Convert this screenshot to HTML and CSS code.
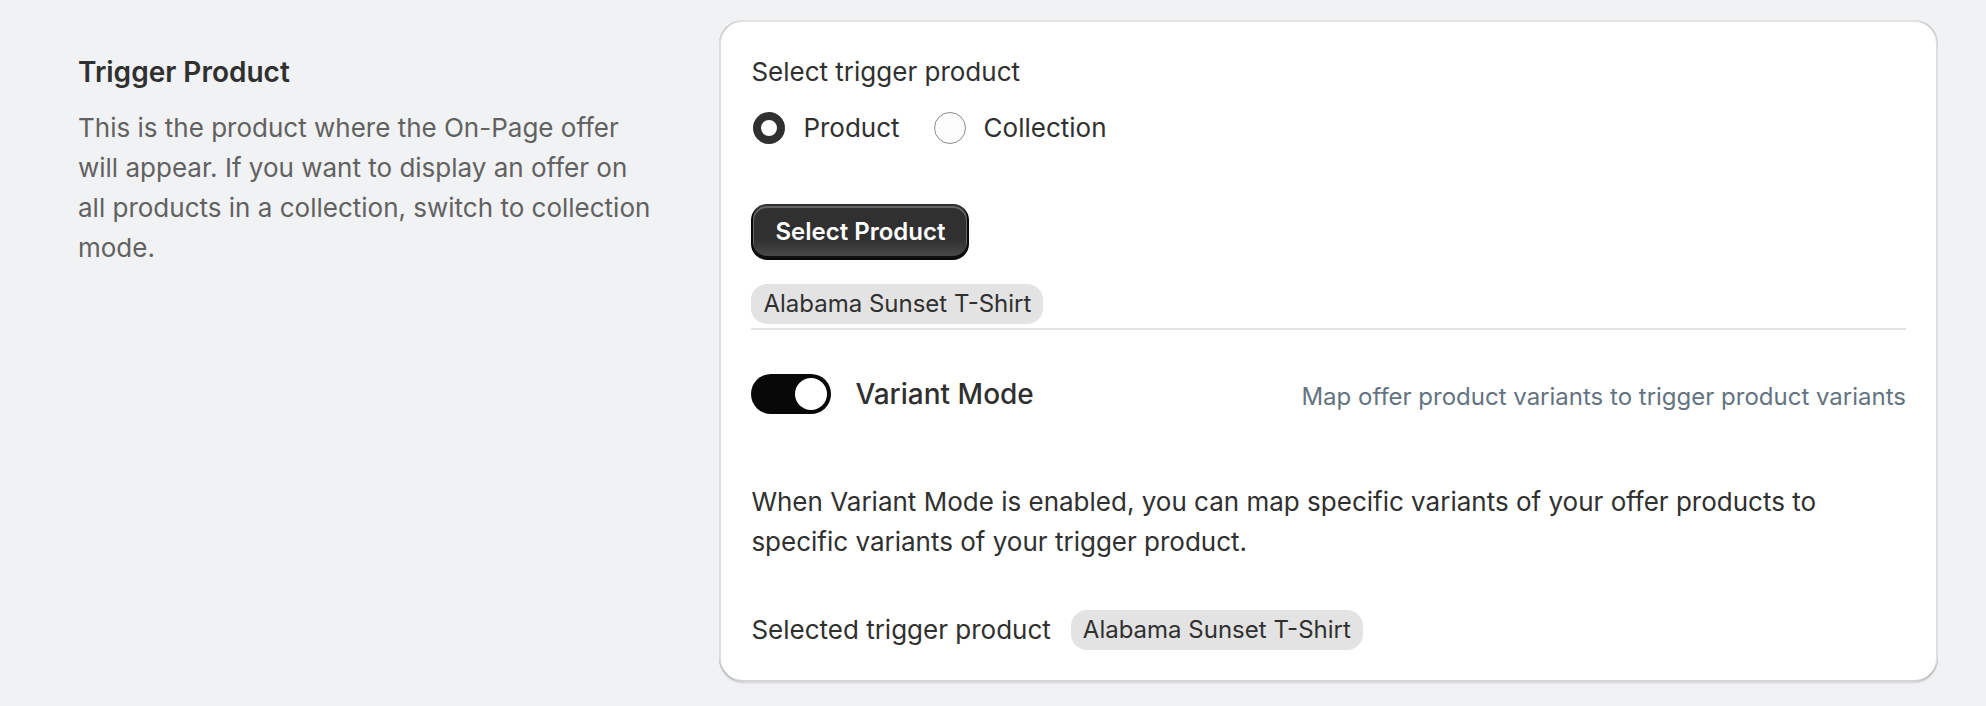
FILE: index.html
```html
<!DOCTYPE html>
<html lang="en">
<head>
<meta charset="utf-8">
<title>Trigger Product</title>
<link rel="stylesheet" href="styles.css">
</head>
<body>
<main class="layout">
  <section class="annotation">
    <h2 class="annotation-title">Trigger Product</h2>
    <p class="annotation-text">This is the product where the On-Page offer will appear. If you want to display an offer on all products in a collection, switch to collection mode.</p>
  </section>
  <section class="card">
    <fieldset class="choices">
      <legend class="choices-title">Select trigger product</legend>
      <div class="choices-row">
        <label class="choice"><input class="radio" type="radio" name="trigger" checked>Product</label>
        <label class="choice"><input class="radio" type="radio" name="trigger">Collection</label>
      </div>
    </fieldset>
    <button class="button" type="button">Select Product</button>
    <div class="selection"><span class="tag">Alabama Sunset T-Shirt</span></div>
    <div class="mode">
      <label class="mode-label"><input class="switch" type="checkbox" role="switch" checked>Variant Mode</label>
      <span class="mode-hint">Map offer product variants to trigger product variants</span>
    </div>
    <p class="mode-text">When Variant Mode is enabled, you can map specific variants of your offer products to specific variants of your trigger product.</p>
    <div class="selected"><span>Selected trigger product</span><span class="tag">Alabama Sunset T-Shirt</span></div>
  </section>
</main>
</body>
</html>
```
FILE: styles.css
```css
* {
  box-sizing: border-box;
}

body {
  margin: 0;
  background: #f1f2f4;
  color: #303030;
  font-family: Inter, "Liberation Sans", sans-serif;
  font-size: 26px;
  font-weight: 400;
  line-height: 40px;
}

.layout {
  display: grid;
  grid-template-columns: 10fr 19fr;
  gap: 32px;
  padding: 20px 48px 20px 46px;
}

.annotation {
  padding: 32px 32px 0;
}

.annotation-title {
  margin: 0 0 16px;
  font-size: 28px;
  font-weight: 600;
}

.annotation-text {
  margin: 0;
  color: #616161;
}

.card {
  padding: 32px;
  border-radius: 24px;
  background: #fff;
  box-shadow:
    0 2px 0 rgba(26, 26, 26, 0.07),
    inset 2px 0 0 rgba(0, 0, 0, 0.13),
    inset -2px 0 0 rgba(0, 0, 0, 0.13),
    inset 0 -2px 0 rgba(0, 0, 0, 0.17),
    inset 0 2px 0 rgba(204, 204, 204, 0.5);
}

.choices {
  margin: 0 0 56px;
  padding: 0;
  border: 0;
}

.choices-title {
  margin-bottom: 16px;
  padding: 0;
}

.choices-row {
  display: flex;
  gap: 32px;
}

.choice {
  display: flex;
  align-items: center;
  gap: 16px;
}

.radio {
  appearance: none;
  width: 32px;
  height: 32px;
  margin: 0 2px;
  border: 1px solid #8a8a8a;
  border-radius: 50%;
  background: #fdfdfd;
}

.radio:checked {
  border: 8px solid #303030;
  background: #fff;
}

.button {
  display: block;
  height: 56px;
  padding: 0 24px;
  border: 0;
  border-radius: 16px;
  background: linear-gradient(rgba(48, 48, 48, 0) 63%, rgba(255, 255, 255, 0.15) 100%), #303030;
  box-shadow:
    inset 0 -2px 0 2px rgba(0, 0, 0, 0.8),
    inset 0 0 0 2px #303030,
    inset 0 1px 0 3px rgba(255, 255, 255, 0.25);
  color: #fff;
  font: 600 24px/32px Inter, "Liberation Sans", sans-serif;
}

.selection {
  display: flex;
  padding: 24px 0 4px;
  border-bottom: 2px solid #e3e3e3;
}

.tag {
  padding: 4px 12px;
  border-radius: 16px;
  background: #e3e3e3;
  font-size: 24px;
  line-height: 32px;
}

.mode {
  display: flex;
  align-items: center;
  justify-content: space-between;
  margin: 44px 0 68px;
}

.mode-label {
  display: flex;
  align-items: center;
  gap: 24px;
  font-size: 28px;
  font-weight: 500;
}

.switch {
  appearance: none;
  display: flex;
  justify-content: flex-end;
  width: 80px;
  height: 40px;
  margin: 0;
  padding: 4px;
  border-radius: 20px;
  background: #080808;
}

.switch::before {
  content: "";
  width: 32px;
  height: 32px;
  border-radius: 50%;
  background: #fff;
}

.switch:not(:checked) {
  justify-content: flex-start;
  background: #8a8a8a;
}

.mode-hint {
  padding-top: 6px;
  color: #637381;
  font-size: 24px;
  line-height: 32px;
}

.mode-text {
  margin: 0 0 48px;
}

.selected {
  display: flex;
  align-items: center;
  gap: 20px;
}
```
